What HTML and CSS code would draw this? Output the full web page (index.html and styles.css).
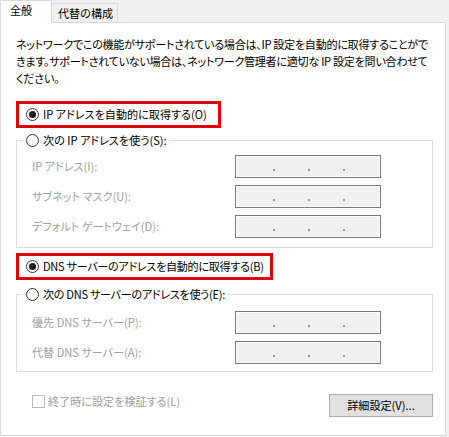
FILE: index.html
```html
<!DOCTYPE html>
<html lang="ja">
<head>
<meta charset="utf-8">
<link rel="stylesheet" href="styles.css">
</head>
<body>
<div class="dialog">
  <div class="tabs">
    <div class="tab tab-active">全般</div>
    <div class="tab tab-inactive">代替の構成</div>
    <div class="tab-fill"></div>
  </div>
  <div class="panel">
    <p class="desc">
      <span>ネットワークでこの機能がサポートされている場合は、IP 設定を自動的に取得することがで</span>
      <span>きます。サポートされていない場合は、ネットワーク管理者に適切な IP 設定を問い合わせて</span>
      <span>ください。</span>
    </p>

    <div class="highlight hl-ip">
      <div class="radio-row"><span class="radio checked"></span>IP アドレスを自動的に取得する(O)</div>
    </div>

    <fieldset class="group group-ip">
      <legend class="legend"><span class="radio"></span>次の IP アドレスを使う(S):</legend>
      <div class="fields fields-ip">
        <span class="field-label">IP アドレス(I):</span>
        <span class="ipbox"><i></i><i></i><i></i></span>
        <span class="field-label">サブネット マスク(U):</span>
        <span class="ipbox"><i></i><i></i><i></i></span>
        <span class="field-label">デフォルト ゲートウェイ(D):</span>
        <span class="ipbox"><i></i><i></i><i></i></span>
      </div>
    </fieldset>

    <div class="highlight hl-dns">
      <div class="radio-row"><span class="radio checked"></span>DNS サーバーのアドレスを自動的に取得する(B)</div>
    </div>

    <fieldset class="group group-dns">
      <legend class="legend"><span class="radio"></span>次の DNS サーバーのアドレスを使う(E):</legend>
      <div class="fields fields-dns">
        <span class="field-label">優先 DNS サーバー(P):</span>
        <span class="ipbox"><i></i><i></i><i></i></span>
        <span class="field-label">代替 DNS サーバー(A):</span>
        <span class="ipbox"><i></i><i></i><i></i></span>
      </div>
    </fieldset>

    <div class="footer">
      <div class="check-row"><span class="checkbox"></span>終了時に設定を検証する(L)</div>
      <button class="btn" type="button">詳細設定(V)...</button>
    </div>
  </div>
</div>
</body>
</html>
```

FILE: styles.css
```css
html, body {
  margin: 0;
  padding: 0;
}
body {
  background: #f0f0f0;
  font-family: "Noto Sans CJK JP", "Noto Sans", sans-serif;
  font-size: 11.1px;
  color: #000;
  font-feature-settings: "palt";
}
.dialog {
  width: 446px;
}
.tabs {
  display: flex;
  height: 23px;
}
.tab {
  box-sizing: border-box;
  line-height: 17px;
  white-space: nowrap;
}
.tab-active {
  width: 52px;
  height: 23px;
  background: #fff;
  border: 1px solid #d9d9d9;
  border-bottom: none;
  padding: 1px 0 0 9px;
}
.tab-inactive {
  width: 66px;
  height: 20px;
  margin-top: 3px;
  background: #f0f0f0;
  border: 1px solid #d9d9d9;
  border-left: none;
  padding: 1px 0 0 6px;
}
.tab-fill {
  flex: 1;
  border-bottom: 1px solid #d9d9d9;
}
.panel {
  background: #fff;
  border: 1px solid #d9d9d9;
  border-top: none;
  padding: 13px 12px 18px 15px;
}
.desc {
  margin: 0;
  line-height: 17px;
  letter-spacing: -0.3px;
}
.desc span {
  display: block;
  white-space: nowrap;
}
.highlight {
  box-sizing: border-box;
  height: 27px;
  border: 3px solid #e30000;
  display: flex;
  align-items: center;
  padding-left: 7px;
}
.hl-ip {
  width: 205px;
  margin-top: 14px;
}
.hl-dns {
  width: 257px;
  margin-top: 5px;
  letter-spacing: -0.3px;
}
.radio-row {
  display: flex;
  align-items: center;
  line-height: 17px;
  white-space: nowrap;
}
.radio {
  flex: none;
  box-sizing: border-box;
  width: 13px;
  height: 13px;
  border: 1px solid #333;
  border-radius: 50%;
  background: #fff;
  margin-right: 4px;
  display: flex;
  align-items: center;
  justify-content: center;
}
.radio.checked::after {
  content: "";
  width: 7px;
  height: 7px;
  border-radius: 50%;
  background: #1b1b1b;
}
.group {
  margin: 4px 0 0;
  padding: 0 0 0 7px;
  border: 1px solid #dcdcdc;
  min-width: 0;
}
.group-dns {
  margin-top: 6px;
}
.legend {
  padding: 0 2px;
  display: flex;
  align-items: center;
  line-height: 17px;
  white-space: nowrap;
}
.group-dns .legend {
  letter-spacing: -0.3px;
}
.fields {
  margin-left: 8px;
  display: grid;
  grid-template-columns: 203px 146px;
  grid-auto-rows: 23px;
  row-gap: 7px;
  align-items: center;
}
.fields-ip {
  padding: 6px 0 9px;
}
.fields-dns {
  padding: 8px 0 7px;
}
.field-label {
  color: #a0a0a0;
  white-space: nowrap;
  line-height: 17px;
}
.ipbox {
  box-sizing: border-box;
  height: 23px;
  border: 1px solid #7a7a7a;
  background: #f0f0f0;
  box-shadow: inset 0 0 0 1px #fff;
  display: flex;
  align-items: flex-start;
  padding: 13px 0 0 37px;
  gap: 33px;
}
.ipbox i {
  display: block;
  width: 2px;
  height: 2px;
  background: #8a93a8;
}
.footer {
  margin-top: 22px;
  display: flex;
  justify-content: space-between;
  align-items: flex-start;
}
.check-row {
  margin: 1px 0 0 16px;
  display: flex;
  align-items: center;
  line-height: 13px;
  color: #a0a0a0;
  white-space: nowrap;
}
.checkbox {
  box-sizing: border-box;
  width: 13px;
  height: 13px;
  border: 1px solid #bcbcbc;
  background: #fff;
  margin-right: 3px;
}
.btn {
  box-sizing: border-box;
  width: 104px;
  height: 23px;
  padding: 0;
  margin: 0;
  border: 1px solid #adadad;
  background: #e1e1e1;
  font: inherit;
  color: #000;
  line-height: 17px;
}
```
